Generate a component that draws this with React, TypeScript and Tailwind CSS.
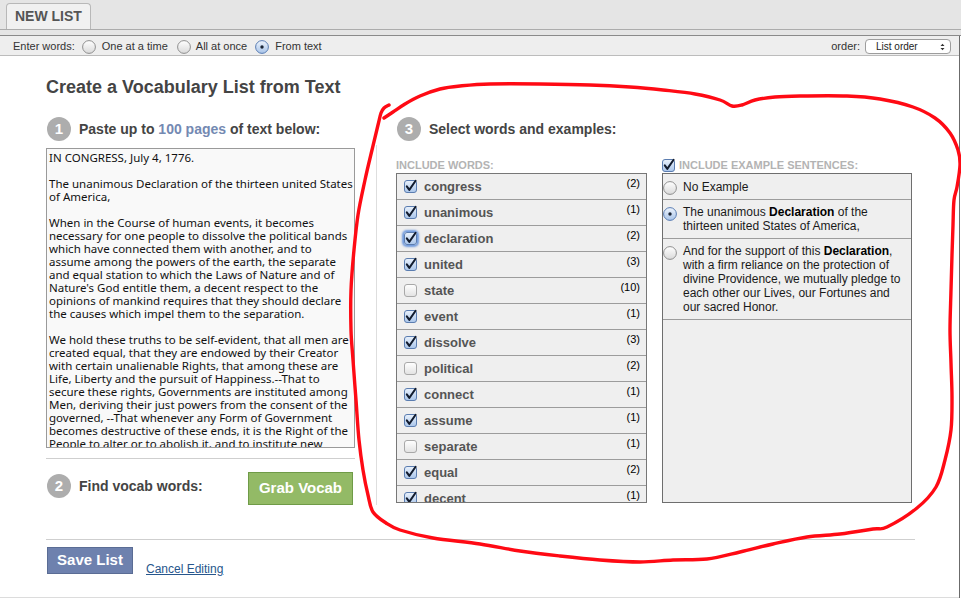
import React from 'react';

type Word = { word: string; count: number; on: boolean; focus?: boolean };

const words: Word[] = [
  { word: 'congress', count: 2, on: true },
  { word: 'unanimous', count: 1, on: true },
  { word: 'declaration', count: 2, on: true, focus: true },
  { word: 'united', count: 3, on: true },
  { word: 'state', count: 10, on: false },
  { word: 'event', count: 1, on: true },
  { word: 'dissolve', count: 3, on: true },
  { word: 'political', count: 2, on: false },
  { word: 'connect', count: 1, on: true },
  { word: 'assume', count: 1, on: true },
  { word: 'separate', count: 1, on: false },
  { word: 'equal', count: 2, on: true },
  { word: 'decent', count: 1, on: true },
];

const sourceText = [
  'IN CONGRESS, July 4, 1776.',
  '',
  'The unanimous Declaration of the thirteen united States',
  'of America,',
  '',
  'When in the Course of human events, it becomes',
  'necessary for one people to dissolve the political bands',
  'which have connected them with another, and to',
  'assume among the powers of the earth, the separate',
  'and equal station to which the Laws of Nature and of',
  "Nature's God entitle them, a decent respect to the",
  'opinions of mankind requires that they should declare',
  'the causes which impel them to the separation.',
  '',
  'We hold these truths to be self-evident, that all men are',
  'created equal, that they are endowed by their Creator',
  'with certain unalienable Rights, that among these are',
  'Life, Liberty and the pursuit of Happiness.--That to',
  'secure these rights, Governments are instituted among',
  'Men, deriving their just powers from the consent of the',
  'governed, --That whenever any Form of Government',
  'becomes destructive of these ends, it is the Right of the',
  'People to alter or to abolish it, and to institute new',
];

// hand-drawn marker loop around step 3
const inkPoints: [number, number][] = [
  [389, 105], [384, 108], [381, 113], [378, 125], [372, 150], [365, 180], [358, 215],
  [354, 250], [351, 290], [351, 330], [353, 360], [356, 400], [359, 440], [363, 470],
  [368, 495], [373, 512], [386, 523], [400, 530], [433, 538], [480, 544], [520, 551],
  [560, 556], [600, 560], [640, 562], [673, 560], [707, 559], [740, 552], [773, 544],
  [807, 537], [840, 534], [873, 529], [887, 527], [917, 508], [936, 487], [945, 460],
  [951, 430], [952, 397], [951, 363], [950, 330], [951, 290], [952, 255], [953, 225],
  [954, 200], [957, 187], [960, 165], [958, 150], [950, 133], [935, 118], [913, 107],
  [880, 99], [847, 96], [800, 96], [775, 97], [755, 100], [742, 105], [732, 106],
  [720, 100], [695, 94], [663, 90], [630, 87], [590, 85], [540, 84], [490, 84],
  [460, 86], [440, 89], [420, 96], [405, 104], [393, 112], [384, 118],
];

function smoothPath(pts: [number, number][]) {
  let d = `M${pts[0][0]} ${pts[0][1]}`;
  for (let i = 0; i < pts.length - 1; i++) {
    const p0 = pts[i - 1] ?? pts[i];
    const p1 = pts[i];
    const p2 = pts[i + 1];
    const p3 = pts[i + 2] ?? p2;
    const c1x = p1[0] + (p2[0] - p0[0]) / 6;
    const c1y = p1[1] + (p2[1] - p0[1]) / 6;
    const c2x = p2[0] - (p3[0] - p1[0]) / 6;
    const c2y = p2[1] - (p3[1] - p1[1]) / 6;
    d += ` C${c1x.toFixed(1)} ${c1y.toFixed(1)} ${c2x.toFixed(1)} ${c2y.toFixed(1)} ${p2[0]} ${p2[1]}`;
  }
  return d;
}

function CheckBox({ on, focus }: { on: boolean; focus?: boolean }) {
  return (
    <span
      className={
        focus
          ? 'inline-flex h-[13px] w-[13px] shrink-0 rounded-[3px] shadow-[0_0_2px_2px_rgba(70,125,215,0.75)]'
          : 'inline-flex h-[13px] w-[13px] shrink-0'
      }
    >
      <svg width="13" height="13" viewBox="0 0 13 13" className="overflow-visible">
        <defs>
          <linearGradient id="cbOn" x1="0" y1="0" x2="0" y2="1">
            <stop offset="0" stopColor="#eaf2fc" />
            <stop offset="1" stopColor="#a9c5ea" />
          </linearGradient>
          <linearGradient id="cbOff" x1="0" y1="0" x2="0" y2="1">
            <stop offset="0" stopColor="#ffffff" />
            <stop offset="1" stopColor="#e2e2e2" />
          </linearGradient>
        </defs>
        <rect
          x="0.5"
          y="0.5"
          width="12"
          height="12"
          rx="2.5"
          fill={on ? 'url(#cbOn)' : 'url(#cbOff)'}
          stroke={on ? '#5b7db0' : '#a8a8a8'}
        />
        {on && (
          <path
            d="M2.8 6.4 L5.3 9.9 L11.6 0.8"
            fill="none"
            stroke="#121c2e"
            strokeWidth="2"
            strokeLinecap="round"
            strokeLinejoin="round"
          />
        )}
      </svg>
    </span>
  );
}

function Radio({ on }: { on?: boolean }) {
  return (
    <svg width="14" height="14" viewBox="0 0 14 14" className="shrink-0">
      <defs>
        <linearGradient id="rdOff" x1="0" y1="0" x2="0" y2="1">
          <stop offset="0" stopColor="#ffffff" />
          <stop offset="1" stopColor="#d9d9d9" />
        </linearGradient>
        <linearGradient id="rdOn" x1="0" y1="0" x2="0" y2="1">
          <stop offset="0" stopColor="#eef4fc" />
          <stop offset="1" stopColor="#a7c3e8" />
        </linearGradient>
      </defs>
      <circle
        cx="7"
        cy="7"
        r="6.4"
        fill={on ? 'url(#rdOn)' : 'url(#rdOff)'}
        stroke={on ? '#5a7db3' : '#8f8f8f'}
      />
      {on && <circle cx="7" cy="7" r="1.7" fill="#1a2435" />}
    </svg>
  );
}

function StepHead({ n, children }: { n: number; children: React.ReactNode }) {
  return (
    <div className="flex h-[24px] items-center gap-[8px]">
      <span className="ml-px flex h-[24px] w-[24px] items-center justify-center rounded-full bg-[#adadad] text-[15px] font-bold text-white">
        {n}
      </span>
      <span className="text-[14px] font-bold text-[#444]">{children}</span>
    </div>
  );
}

function Toolbar() {
  return (
    <div className="flex h-[20px] items-center justify-between border-b border-[#bcbcbc] bg-[#eeeeee] pl-[13px] pr-[8px] pt-[2px] text-[11px] text-[#333]">
      <div className="flex items-center">
        <span className="mr-[7px]">Enter words:</span>
        <Radio />
        <span className="ml-[6px] mr-[9px]">One at a time</span>
        <Radio />
        <span className="ml-[5px] mr-[8px]">All at once</span>
        <Radio on />
        <span className="ml-[6px]">From text</span>
      </div>
      <div className="flex items-center gap-[5px]">
        <span>order:</span>
        <div className="flex h-[15px] w-[86px] items-center justify-between rounded-[4px] border border-[#9d9d9d] bg-white pl-[10px] pr-[5px] text-[10px] text-[#222]">
          <span>List order</span>
          <svg width="5" height="8" viewBox="0 0 5 8">
            <path d="M0.5 3 L2.5 0.8 L4.5 3 Z M0.5 5 L2.5 7.2 L4.5 5 Z" fill="#333" />
          </svg>
        </div>
      </div>
    </div>
  );
}

export default function App() {
  return (
    <div className="relative h-[598px] w-[961px] overflow-hidden bg-white font-['Liberation_Sans',Arial,sans-serif] text-[#333]">
      {/* tab strip */}
      <div className="flex h-[30px] items-end border-b border-[#acacac] bg-[#e5e5e5] pl-[6px]">
        <div className="flex h-[26px] items-center rounded-t-[4px] border border-b-0 border-[#b8b8b8] bg-[#f1f1f1] px-[8px] text-[14px] font-bold text-[#555]">
          NEW LIST
        </div>
      </div>
      <div className="h-[6px] border-b border-[#8a8a8a] bg-[#e5e5e5]" />

      <div className="w-[960px] border-r border-[#6b6b6b]">
        <Toolbar />

        <main className="h-[542px] border-b border-[#dcdcdc] pl-[46px] pt-[20px]">
          <h1 className="h-[22px] text-[18px] font-bold leading-[22px] text-[#444]">
            Create a Vocabulary List from Text
          </h1>

          <div className="mt-[19px] flex items-start">
            {/* step 1 + 2 */}
            <div className="w-[309px]">
              <StepHead n={1}>
                Paste up to <span className="text-[#7489b2]">100 pages</span> of text below:
              </StepHead>
              <div className="mt-[7px] h-[300px] w-[309px] overflow-hidden whitespace-pre border border-[#9a9a9a] bg-[#f9f9f9] pl-[2px] pt-[2px] font-['Noto_Sans',sans-serif] text-[11.5px] leading-[13px] text-[#111]">
                {sourceText.map((line, i) => (
                  <div key={i} className="h-[13px]">
                    {line}
                  </div>
                ))}
              </div>
              <div className="mt-[10px] border-t border-[#cfcfcf]" />
              <div className="mt-[13px] flex h-[33px] items-start justify-between">
                <div className="mt-[2px]">
                  <StepHead n={2}>Find vocab words:</StepHead>
                </div>
                <button className="mr-[2px] h-[33px] w-[105px] border border-[#6f9b47] bg-[#93ba66] text-[15px] font-bold text-white">
                  Grab Vocab
                </button>
              </div>
            </div>

            <div className="ml-[21px] mt-[28px] h-[360px] w-px bg-[#dedede]" />

            {/* step 3 */}
            <div className="ml-[19px]">
              <StepHead n={3}>Select words and examples:</StepHead>
              <div className="mt-[16px] flex items-start">
                <div className="w-[251px]">
                  <div className="flex h-[16px] items-center text-[11px] font-bold text-[#b3b3b3]">
                    INCLUDE WORDS:
                  </div>
                  <div className="h-[330px] overflow-hidden border border-[#777] bg-[#efefef]">
                    {words.map((w) => (
                      <div
                        key={w.word}
                        className="flex h-[26px] shrink-0 justify-between border-b border-[#9c9c9c] pl-[7px] pr-[6px]"
                      >
                        <div className="flex items-center gap-[7px]">
                          <CheckBox on={w.on} focus={w.focus} />
                          <span className="text-[13px] font-bold text-[#555]">{w.word}</span>
                        </div>
                        <span className="pt-[3px] text-[11px] leading-[13px] text-black">
                          ({w.count})
                        </span>
                      </div>
                    ))}
                  </div>
                </div>

                <div className="ml-[15px] w-[250px]">
                  <div className="flex h-[16px] items-center gap-[4px] text-[11px] font-bold text-[#b3b3b3]">
                    <CheckBox on />
                    INCLUDE EXAMPLE SENTENCES:
                  </div>
                  <div className="h-[330px] border border-[#6e6e6e] bg-[#efefef] text-[12px] leading-[14px] text-[#1a1a1a]">
                    <div className="flex h-[26px] items-center gap-[6px] border-b border-[#9c9c9c]">
                      <span className="mt-[3px] flex">
                        <Radio />
                      </span>
                      <span>No Example</span>
                    </div>
                    <div className="flex h-[39px] items-start gap-[6px] border-b border-[#9c9c9c] pt-[5px]">
                      <span className="mt-[2px] flex">
                        <Radio on />
                      </span>
                      <span className="whitespace-nowrap">
                        The unanimous <b className="text-black">Declaration</b> of the
                        <br />
                        thirteen united States of America,
                      </span>
                    </div>
                    <div className="flex h-[81px] items-start gap-[6px] border-b border-[#9c9c9c] pt-[5px]">
                      <span className="mt-[2px] flex">
                        <Radio />
                      </span>
                      <span className="whitespace-nowrap">
                        And for the support of this <b className="text-black">Declaration</b>,
                        <br />
                        with a firm reliance on the protection of
                        <br />
                        divine Providence, we mutually pledge to
                        <br />
                        each other our Lives, our Fortunes and
                        <br />
                        our sacred Honor.
                      </span>
                    </div>
                  </div>
                </div>
              </div>
            </div>
          </div>

          <div className="mt-[34px] w-[869px] border-t border-[#cfcfcf]" />
          <div className="mt-[7px] flex items-start">
            <button className="ml-px h-[27px] w-[86px] border border-[#5a6c94] bg-[#6e81ae] text-[15px] font-bold text-white">
              Save List
            </button>
            <a href="#" className="ml-[13px] mt-[15px] text-[12px] leading-[14px] text-[#27568c] underline">
              Cancel Editing
            </a>
          </div>
        </main>
      </div>

      <svg
        className="pointer-events-none absolute left-0 top-0"
        width="961"
        height="598"
        viewBox="0 0 961 598"
      >
        <path
          d={smoothPath(inkPoints)}
          fill="none"
          stroke="#ff0a14"
          strokeWidth="3.4"
          strokeLinecap="round"
          strokeLinejoin="round"
        />
      </svg>
    </div>
  );
}
